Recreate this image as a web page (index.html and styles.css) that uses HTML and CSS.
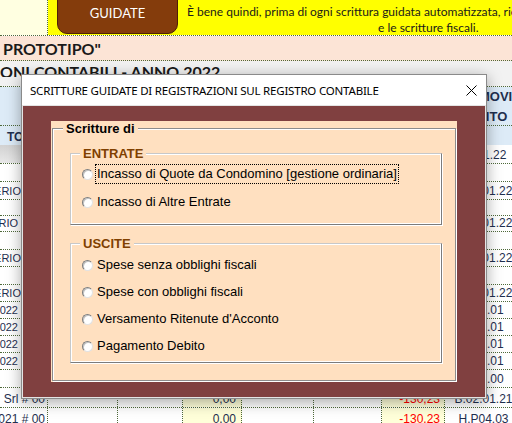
FILE: index.html
```html
<!DOCTYPE html>
<html lang="it">
<head>
<meta charset="utf-8">
<title>Scritture guidate</title>
<link rel="stylesheet" href="styles.css">
</head>
<body>
<div class="sheet">
  <div class="row r-top">
    <div class="top-a"></div>
    <div class="top-b">
      <div class="btn-guidate">GUIDATE</div>
      <div class="note">
        <div class="note-l1">È bene quindi, prima di ogni scrittura guidata automatizzata, ricontrollare i saldi</div>
        <div class="note-l2">e le scritture fiscali.</div>
      </div>
    </div>
  </div>
  <div class="row r-title">PROTOTIPO"</div>
  <div class="row r-sub"><div class="sub-clip">ONI CONTABILI - ANNO 2022</div></div>
  <div class="row r-h1">
    <div class="c-l"></div><div class="c-m"></div>
    <div class="c-r hd"><div class="hd1">MOVI</div><div class="hd2">CREDITO</div></div>
  </div>
  <div class="row r-h2">
    <div class="c-l hd-l">TOTALE</div><div class="c-m"></div><div class="c-r"></div>
  </div>
  <div class="row r-h3">
    <div class="c-l gray"></div><div class="c-m"></div><div class="c-r">01.01.22</div>
  </div>
  <div class="row h18"><div class="c-l"></div><div class="c-m"></div><div class="c-r"></div></div>
  <div class="row h18"><div class="c-l">ERIO</div><div class="c-m"></div><div class="c-r">D.01.01.22</div></div>
  <div class="row h16"><div class="c-l"></div><div class="c-m"></div><div class="c-r"></div></div>
  <div class="row h16"><div class="c-l pr3">RIO</div><div class="c-m"></div><div class="c-r">D.01.01.22</div></div>
  <div class="row h18"><div class="c-l"></div><div class="c-m"></div><div class="c-r"></div></div>
  <div class="row h17"><div class="c-l">ERIO</div><div class="c-m"></div><div class="c-r">D.01.01.22</div></div>
  <div class="row h18"><div class="c-l"></div><div class="c-m"></div><div class="c-r"></div></div>
  <div class="row h17"><div class="c-l">ERIO</div><div class="c-m"></div><div class="c-r">D.01.01.22</div></div>
  <div class="row h17"><div class="c-l pr3">2022</div><div class="c-m"></div><div class="c-r">B.00.01</div></div>
  <div class="row h17"><div class="c-l pr3">2022</div><div class="c-m"></div><div class="c-r">B.00.01</div></div>
  <div class="row h17"><div class="c-l pr3">2022</div><div class="c-m"></div><div class="c-r">B.00.01</div></div>
  <div class="row h17"><div class="c-l pr3">2022</div><div class="c-m"></div><div class="c-r">B.00.01</div></div>
  <div class="row h18"><div class="c-l"></div><div class="c-m"></div><div class="c-r">A.01.00</div></div>
  <div class="row r-b">
    <div class="cb cb-a">Srl # 00</div>
    <div class="cb cb-b"></div>
    <div class="cb cb-c"></div>
    <div class="cb cb-d num">0,00</div>
    <div class="cb cb-e"></div>
    <div class="cb cb-f"></div>
    <div class="cb cb-g num neg">-130,23</div>
    <div class="cb cb-h">B.02.01.21</div>
  </div>
  <div class="row r-b">
    <div class="cb cb-a">2021 # 00</div>
    <div class="cb cb-b"></div>
    <div class="cb cb-c"></div>
    <div class="cb cb-d num">0,00</div>
    <div class="cb cb-e"></div>
    <div class="cb cb-f"></div>
    <div class="cb cb-g num neg">-130,23</div>
    <div class="cb cb-h">H.P04.03</div>
  </div>
</div>

<div class="dialog">
  <div class="dlg-titlebar">
    <span class="dlg-title">SCRITTURE GUIDATE DI REGISTRAZIONI SUL REGISTRO CONTABILE</span>
    <svg class="dlg-close" viewBox="0 0 11 11" width="11" height="11"><path d="M0.5 0.5L10.5 10.5M10.5 0.5L0.5 10.5" stroke="#000" stroke-width="1" fill="none"/></svg>
  </div>
  <div class="dlg-client">
    <div class="panel">
      <fieldset class="frame">
        <legend>Scritture di</legend>
        <fieldset class="group group-in">
          <legend>ENTRATE</legend>
          <div class="opts">
            <label class="opt focused"><span class="radio"></span><span class="opt-text">Incasso di Quote da Condomino [gestione ordinaria]</span></label>
            <label class="opt"><span class="radio"></span><span class="opt-text">Incasso di Altre Entrate</span></label>
          </div>
        </fieldset>
        <fieldset class="group group-out">
          <legend>USCITE</legend>
          <div class="opts">
            <label class="opt"><span class="radio"></span><span class="opt-text">Spese senza obblighi fiscali</span></label>
            <label class="opt"><span class="radio"></span><span class="opt-text">Spese con obblighi fiscali</span></label>
            <label class="opt"><span class="radio"></span><span class="opt-text">Versamento Ritenute d'Acconto</span></label>
            <label class="opt"><span class="radio"></span><span class="opt-text">Pagamento Debito</span></label>
          </div>
        </fieldset>
      </fieldset>
    </div>
  </div>
</div>
</body>
</html>
```

FILE: styles.css
```css
* { box-sizing: border-box; }
html, body { margin: 0; padding: 0; }
body {
  width: 512px;
  height: 423px;
  overflow: hidden;
  position: relative;
  background: #fff;
  font-family: "Liberation Sans", Arial, sans-serif;
  color: #1f2f4f;
}
.sheet { width: 522px; }
.row { display: flex; border-bottom: 1px dotted #4f6a3a; background: #fff; }

/* top row */
.r-top { height: 36px; }
.top-a { width: 48px; flex: none; background: #ffffe1; border-right: 1px dotted #4f6a3a; }
.top-b { flex: 1; display: flex; background: #ffff00; overflow: hidden; }
.btn-guidate {
  flex: none;
  width: 121px;
  height: 48px;
  margin: -14px 0 0 9px;
  padding-top: 5px;
  display: flex;
  align-items: center;
  justify-content: center;
  background: #843c0c;
  border: 1px solid #4e2106;
  border-radius: 10px;
  color: #fff;
  font: 13px "Lato", sans-serif;
}
.note {
  margin-left: 9px;
  padding-top: 4px;
  font: 12px/16px "Lato", sans-serif;
  color: #1a1a1a;
  white-space: nowrap;
}
.note-l2 { margin-left: 191px; }

.r-title {
  height: 25px;
  align-items: center;
  background: #fce4d6;
  padding-left: 3px;
  font: bold 16px "Lato", sans-serif;
  color: #1a1a1a;
}
.r-sub { height: 26px; background: #f2f2f2; }
.sub-clip {
  height: 16px;
  overflow: hidden;
  padding-top: 1px;
  font: bold 16px/20px "Lato", sans-serif;
  color: #1a1a1a;
  white-space: nowrap;
}

.r-h1 { height: 39px; background: #ddebf7; }
.r-h2 { height: 19px; background: #ddebf7; border-bottom: 0; }
.r-h3 { height: 19px; }
.h16 { height: 16px; }
.h17 { height: 17px; }
.h18 { height: 18px; }

.c-l {
  width: 21px;
  flex: none;
  display: flex;
  justify-content: flex-end;
  align-items: flex-end;
  padding-bottom: 1px;
  overflow: hidden;
  white-space: nowrap;
  font-size: 11px;
  line-height: 14px;
}
.pr3 { padding-right: 3px; }
.c-m { flex: 1; }
.c-r {
  width: 78px;
  flex: none;
  display: flex;
  justify-content: center;
  align-items: flex-end;
  padding-bottom: 1px;
  white-space: nowrap;
  overflow: hidden;
  font-size: 12px;
  line-height: 14px;
}
.hd { display: block; padding: 0; font-weight: bold; font-size: 13px; line-height: 20px; }
.hd1 { padding-left: 35px; }
.hd2 { padding-left: 5px; }
.hd-l {
  justify-content: flex-start;
  align-items: center;
  padding: 3px 0 0 7px;
  font-weight: bold;
  font-size: 12px;
}
.gray { background: linear-gradient(#d2d2d2, #e8e8e8); }

/* bottom rows */
.r-b { height: 20px; }
.cb {
  flex: none;
  display: flex;
  align-items: flex-end;
  padding-bottom: 1px;
  border-right: 1px dotted #4f6a3a;
  font-size: 12px;
  line-height: 14px;
  white-space: nowrap;
  overflow: hidden;
}
.cb-a { width: 48px; justify-content: flex-end; padding-right: 2px; }
.cb-b { width: 70px; }
.cb-c { width: 65px; }
.cb-d { width: 59px; background: #ffffd9; }
.cb-e { width: 72px; }
.cb-f { width: 68px; }
.cb-g { width: 63px; background: #ffffd9; }
.cb-h { width: 77px; border-right: 0; justify-content: center; }
.num { justify-content: flex-end; padding-right: 5px; }
.cb-g.num { padding-right: 4px; }
.neg { color: #ff0000; }

/* dialog */
.dialog {
  position: absolute;
  left: 21px;
  top: 74px;
  width: 466px;
  height: 325px;
  border: 1px solid #8a8a8a;
  background: #fff;
  box-shadow: 0 3px 14px rgba(0, 0, 0, 0.35);
  display: flex;
  flex-direction: column;
  z-index: 2;
}
.dlg-titlebar {
  height: 30px;
  flex: none;
  display: flex;
  align-items: center;
  justify-content: space-between;
  padding: 0 9px 0 8px;
  background: #fff;
}
.dlg-title {
  font: 11.5px "Noto Sans", sans-serif;
  letter-spacing: -0.2px;
  color: #000;
  white-space: nowrap;
}
.dlg-close { display: block; width: 11px; height: 11px; }
.dlg-client {
  flex: 1;
  border: 1px solid #e4e4e4;
  background: #804040;
  padding: 15px 28px;
}
.panel { height: 261px; background: #ffe0c0; padding: 0 1px; }
.frame {
  margin: 0;
  padding: 0;
  min-width: 0;
  height: 260px;
  border: 1px solid #8c8c8c;
  box-shadow: inset 1px 1px 0 #fff, 1px 1px 0 #fff;
}
.frame > legend {
  margin-left: 10px;
  padding: 0 3px;
  font: bold 13px/15px "Liberation Sans", Arial, sans-serif;
  color: #000;
  background: #ffe0c0;
}
.group {
  margin: 10px 0 0 17px;
  width: 372px;
  min-width: 0;
  padding: 3px 0 12px 0;
  border: 1px solid;
  border-color: #c8c8c8 #7c7c7c #7c7c7c #c8c8c8;
  box-shadow: inset 1px 1px 0 #fff, inset -1px -1px 0 #fff, 1px 1px 0 #fff;
}
.group > legend {
  margin-left: 9px;
  padding: 0 3px;
  font: bold 13px/15px "Liberation Sans", Arial, sans-serif;
  color: #804000;
  background: #ffe0c0;
}
.group-out { margin-top: 11px; padding: 4px 0 6px 0; }
.opts { display: flex; flex-direction: column; gap: 8px; padding-left: 11px; }
.group-out .opts { gap: 7px; }
.opt { display: flex; align-items: center; height: 20px; }
.radio {
  flex: none;
  width: 11px;
  height: 11px;
  margin-right: 2px;
  border-radius: 50%;
  background: #fff;
  border: 1px solid;
  border-color: #7e7e7e #e2e2e2 #e2e2e2 #7e7e7e;
  box-shadow: inset 1px 1px 0 #c4c4c4;
}
.opt-text {
  border: 1px dotted transparent;
  padding: 0 1px;
  font: 13px/18px "Liberation Sans", Arial, sans-serif;
  color: #000;
  white-space: nowrap;
}
.focused .opt-text { border-color: #000; }
```
